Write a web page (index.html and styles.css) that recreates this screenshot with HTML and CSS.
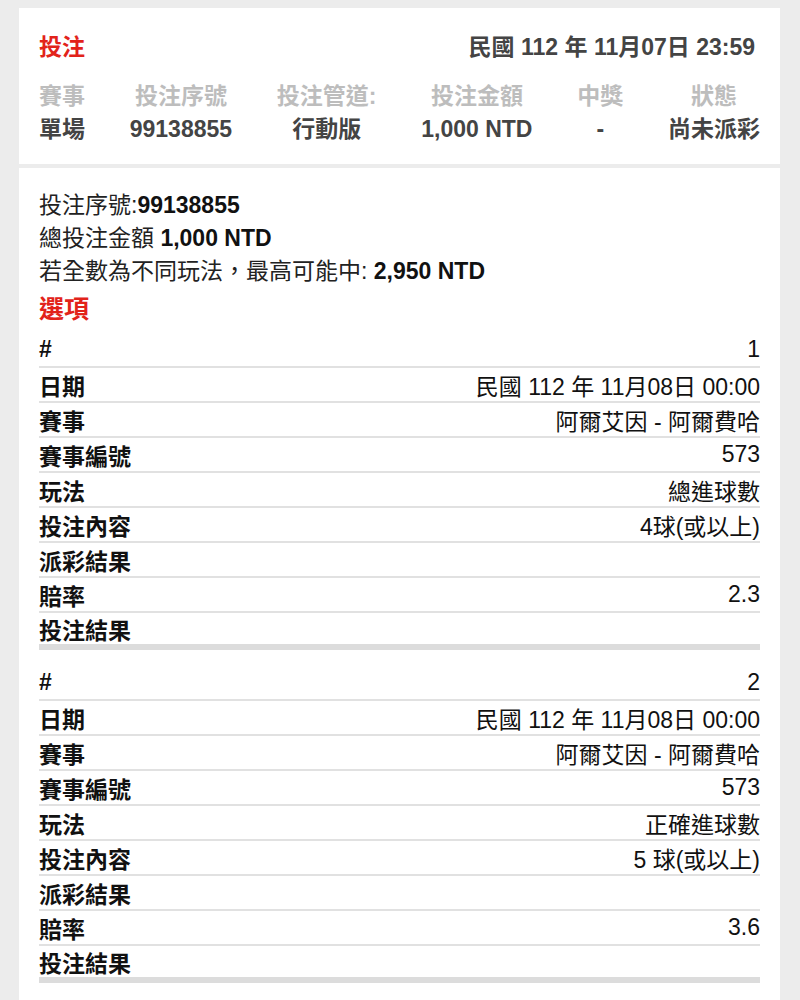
FILE: index.html
```html
<!DOCTYPE html>
<html lang="zh-Hant">
<head>
<meta charset="utf-8">
<title>投注</title>
<link rel="stylesheet" href="styles.css">
</head>
<body>
<div class="page">
  <section class="card summary">
    <div class="summary-top">
      <span class="title">投注</span>
      <span class="stamp">民國 112 年 11月07日 23:59</span>
    </div>
    <div class="cols">
      <div class="col"><div class="col-label">賽事</div><div class="col-value">單場</div></div>
      <div class="col"><div class="col-label">投注序號</div><div class="col-value">99138855</div></div>
      <div class="col"><div class="col-label">投注管道:</div><div class="col-value">行動版</div></div>
      <div class="col"><div class="col-label">投注金額</div><div class="col-value">1,000 NTD</div></div>
      <div class="col"><div class="col-label">中獎</div><div class="col-value">-</div></div>
      <div class="col"><div class="col-label">狀態</div><div class="col-value">尚未派彩</div></div>
    </div>
  </section>

  <section class="card detail">
    <div class="info">
      <div>投注序號:<b>99138855</b></div>
      <div>總投注金額 <b>1,000 NTD</b></div>
      <div>若全數為不同玩法，最高可能中: <b>2,950 NTD</b></div>
    </div>
    <div class="section-title">選項</div>

    <div class="leg">
      <div class="row"><span class="k">#</span><span class="v">1</span></div>
      <div class="row"><span class="k">日期</span><span class="v">民國 112 年 11月08日 00:00</span></div>
      <div class="row"><span class="k">賽事</span><span class="v">阿爾艾因 - 阿爾費哈</span></div>
      <div class="row"><span class="k">賽事編號</span><span class="v">573</span></div>
      <div class="row"><span class="k">玩法</span><span class="v">總進球數</span></div>
      <div class="row"><span class="k">投注內容</span><span class="v">4球(或以上)</span></div>
      <div class="row"><span class="k">派彩結果</span><span class="v"></span></div>
      <div class="row"><span class="k">賠率</span><span class="v">2.3</span></div>
      <div class="row last"><span class="k">投注結果</span><span class="v"></span></div>
    </div>

    <div class="leg">
      <div class="row"><span class="k">#</span><span class="v">2</span></div>
      <div class="row"><span class="k">日期</span><span class="v">民國 112 年 11月08日 00:00</span></div>
      <div class="row"><span class="k">賽事</span><span class="v">阿爾艾因 - 阿爾費哈</span></div>
      <div class="row"><span class="k">賽事編號</span><span class="v">573</span></div>
      <div class="row"><span class="k">玩法</span><span class="v">正確進球數</span></div>
      <div class="row"><span class="k">投注內容</span><span class="v">5 球(或以上)</span></div>
      <div class="row"><span class="k">派彩結果</span><span class="v"></span></div>
      <div class="row"><span class="k">賠率</span><span class="v">3.6</span></div>
      <div class="row last"><span class="k">投注結果</span><span class="v"></span></div>
    </div>
  </section>
</div>
</body>
</html>
```

FILE: styles.css
```css
* { box-sizing: border-box; }
html, body { margin: 0; padding: 0; }
body {
  background: #ececec;
  font-family: "Liberation Sans", "Noto Sans CJK TC", sans-serif;
  font-size: 23px;
  color: #111;
}
.page {
  padding: 8px 20px 0 19px;
  display: flex;
  flex-direction: column;
  gap: 4px;
}
.card {
  background: #fff;
  padding: 0 20px;
}
.summary {
  padding-top: 20px;
  padding-bottom: 18px;
}
.summary-top {
  display: flex;
  justify-content: space-between;
  align-items: center;
  height: 34px;
}
.title {
  color: #e2231a;
  font-weight: 700;
}
.stamp {
  color: #444;
  font-weight: 700;
  margin-right: 5px;
}
.cols {
  margin-top: 18px;
  display: flex;
  justify-content: space-between;
}
.col {
  text-align: center;
  line-height: 33px;
}
.col-label {
  color: #bdbdbd;
  font-weight: 700;
}
.col-value {
  color: #444;
  font-weight: 700;
}
.detail {
  padding-top: 21px;
  padding-bottom: 20px;
}
.info {
  line-height: 33px;
  color: #222;
}
.info b { color: #111; }
.section-title {
  color: #e2231a;
  font-weight: 700;
  font-size: 25px;
  line-height: 33px;
  margin-top: 5px;
}
.leg {
  margin-top: 7px;
}
.leg + .leg {
  margin-top: 16px;
}
.row {
  display: flex;
  justify-content: space-between;
  align-items: center;
  height: 35px;
  border-bottom: 2px solid #e1e1e1;
}
.row.last {
  height: 37px;
  border-bottom: 6px solid #dcdcdc;
}
.k { font-weight: 700; color: #111; }
.v { color: #111; }
```
